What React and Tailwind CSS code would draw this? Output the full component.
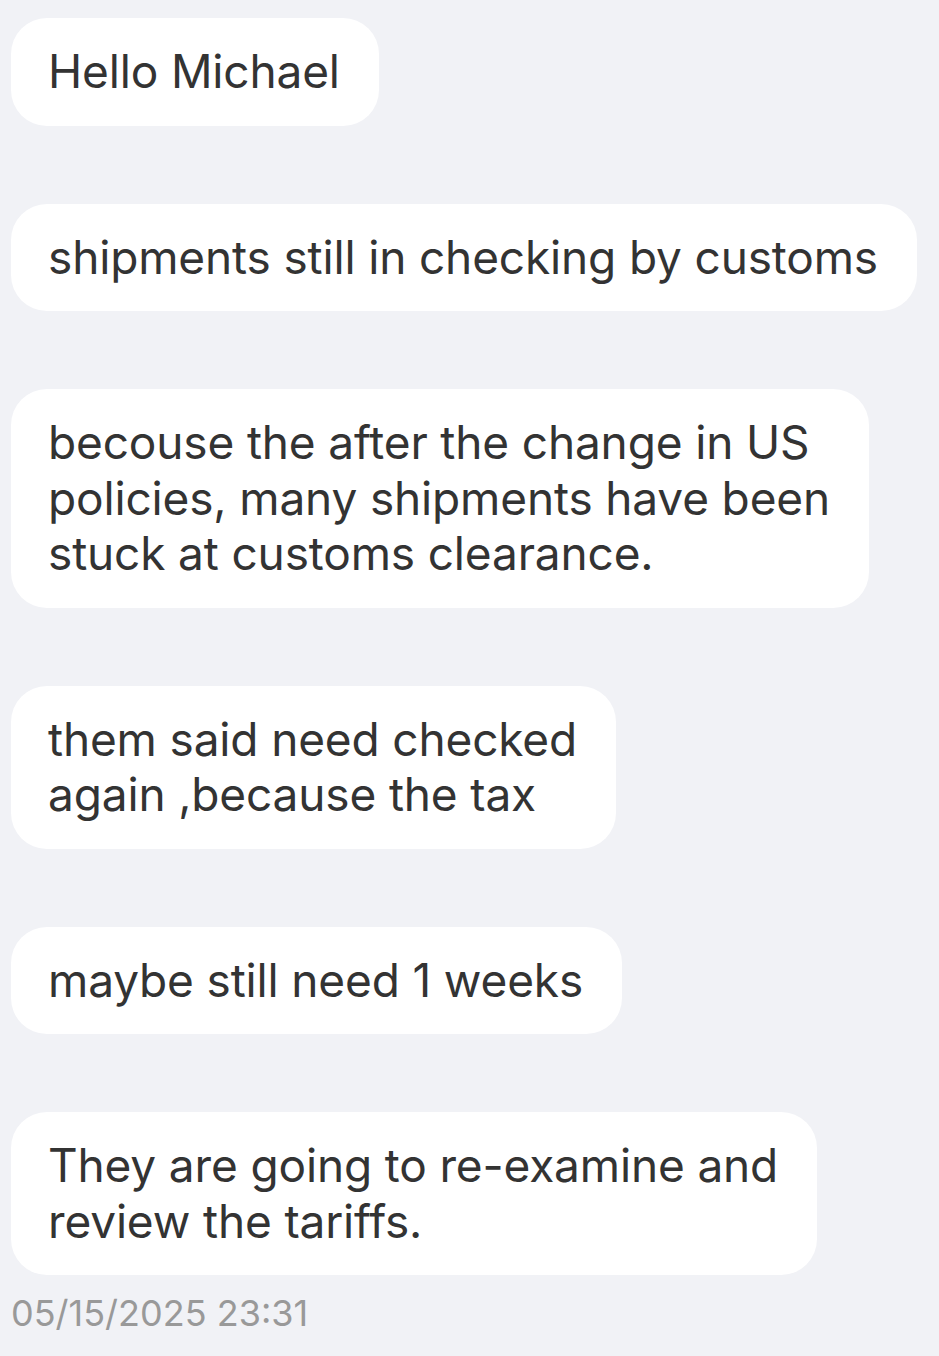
export default function App() {
  const msgs = [
    ["Hello Michael"],
    ["shipments still in checking by customs"],
    ["becouse the after the change in US", "policies, many shipments have been", "stuck at customs clearance."],
    ["them said need checked", "again ,because the tax"],
    ["maybe still need 1 weeks"],
    ["They are going to re-examine and", "review the tariffs."],
  ];
  return (
    <div className="min-h-[1356px] w-[939px] bg-[#f1f2f6] pl-[11px] pt-[18px]" style={{ fontFamily: "Inter, 'Noto Sans', sans-serif" }}>
      <div className="flex flex-col items-start gap-[78px]">
        {msgs.map((lines, i) => (
          <div key={i} className="w-fit rounded-[36px] bg-white pl-[37px] pr-[39px] pt-[26px] pb-[26px] text-[46px] tracking-[-0.15px] leading-[55.5px] text-[#333333] whitespace-nowrap">
            {lines.map((l, j) => (
              <div key={j}>{l}</div>
            ))}
          </div>
        ))}
      </div>
      <div className="mt-[16px] text-[36px] leading-[44px] text-[#999999]">05/15/2025 23:31</div>
    </div>
  );
}
